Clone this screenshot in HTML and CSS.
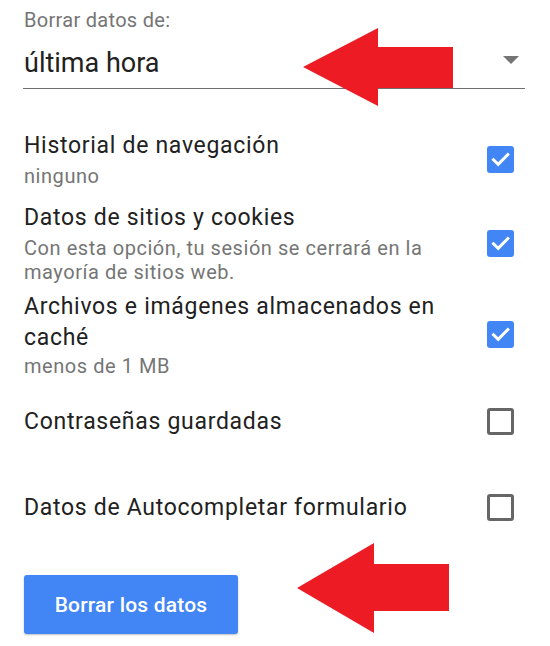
FILE: index.html
```html
<!DOCTYPE html>
<html lang="es">
<head>
<meta charset="utf-8">
<title>Borrar datos de navegación</title>
<link rel="stylesheet" href="styles.css">
</head>
<body>
<main class="page">
  <div class="field-label">Borrar datos de:</div>
  <div class="select">
    <span class="select-value">última hora</span>
    <span class="select-caret"></span>
  </div>

  <ul class="options">
    <li class="row">
      <div class="text">
        <div class="title">Historial de navegación</div>
        <div class="sub">ninguno</div>
      </div>
      <span class="cb checked"><svg viewBox="0 0 27 27" width="27" height="27"><path d="M6.5 13.8 L11.2 18.3 L20.8 8.6" fill="none" stroke="#fff" stroke-width="3" stroke-linecap="square"/></svg></span>
    </li>
    <li class="row">
      <div class="text">
        <div class="title">Datos de sitios y cookies</div>
        <div class="sub">Con esta opción, tu sesión se cerrará en la mayoría de sitios web.</div>
      </div>
      <span class="cb checked"><svg viewBox="0 0 27 27" width="27" height="27"><path d="M6.5 13.8 L11.2 18.3 L20.8 8.6" fill="none" stroke="#fff" stroke-width="3" stroke-linecap="square"/></svg></span>
    </li>
    <li class="row compact">
      <div class="text">
        <div class="title">Archivos e imágenes almacenados en caché</div>
        <div class="sub">menos de 1 MB</div>
      </div>
      <span class="cb checked"><svg viewBox="0 0 27 27" width="27" height="27"><path d="M6.5 13.8 L11.2 18.3 L20.8 8.6" fill="none" stroke="#fff" stroke-width="3" stroke-linecap="square"/></svg></span>
    </li>
    <li class="row single">
      <div class="text">
        <div class="title">Contraseñas guardadas</div>
      </div>
      <span class="cb"></span>
    </li>
    <li class="row single">
      <div class="text">
        <div class="title">Datos de Autocompletar formulario</div>
      </div>
      <span class="cb"></span>
    </li>
  </ul>

  <button class="btn" type="button">Borrar los datos</button>

  <svg class="arrow arrow-top" width="160" height="84" viewBox="0 0 160 84">
    <polygon points="0,39 75,0 75,19 150,19 150,60 75,60 75,78" fill="#ED1C24"/>
  </svg>
  <svg class="arrow arrow-bottom" width="160" height="94" viewBox="0 0 160 94">
    <polygon points="0,45 77,0 77,21 152,21 152,68 77,68 77,90" fill="#ED1C24"/>
  </svg>
</main>
</body>
</html>
```

FILE: styles.css
```css
html, body {
  margin: 0;
  padding: 0;
  background: #ffffff;
}

body {
  font-family: Roboto, "Noto Sans", "Liberation Sans", Arial, sans-serif;
  color: #212121;
}

.page {
  position: relative;
  width: 550px;
  height: 646px;
  box-sizing: border-box;
  padding: 8px 24px 0 24px;
  overflow: hidden;
}

.field-label {
  font-size: 20px;
  line-height: 24px;
  letter-spacing: 0.3px;
  color: #757575;
}

.select {
  display: flex;
  align-items: center;
  justify-content: space-between;
  margin-top: 14px;
  margin-left: -1px;
  padding-bottom: 8px;
  border-bottom: 1.5px solid #6f6f6f;
  width: 502px;
}

.select-value {
  font-size: 27px;
  line-height: 34px;
  color: #212121;
  padding-left: 1px;
}

.select-caret {
  width: 0;
  height: 0;
  border-left: 8px solid transparent;
  border-right: 8px solid transparent;
  border-top: 8px solid #757575;
  margin-right: 6px;
  margin-bottom: 6px;
}

.options {
  list-style: none;
  margin: 34px 0 0 0;
  padding: 0;
}

.row {
  display: flex;
  align-items: center;
  justify-content: space-between;
  padding: 7px 12px 7px 0;
}

.row.compact {
  padding-top: 0;
  padding-bottom: 0;
}

.row.compact .sub {
  margin-top: 1px;
}

.row.single {
  min-height: 86px;
  box-sizing: border-box;
}

.text {
  flex: 1;
  padding-right: 24px;
}

.title {
  font-size: 23px;
  line-height: 31px;
  letter-spacing: 0.7px;
  color: #212121;
}

.sub {
  margin-top: 3px;
  font-size: 20px;
  line-height: 24px;
  letter-spacing: 0.55px;
  color: #757575;
}

.cb {
  flex: none;
  width: 27px;
  height: 27px;
  box-sizing: border-box;
  border: 3px solid #666666;
  border-radius: 3px;
  display: flex;
  align-items: center;
  justify-content: center;
}

.cb svg {
  display: block;
}

.cb.checked {
  border: none;
  background: #4285F4;
}

.btn {
  display: block;
  margin-top: 25px;
  width: 214px;
  height: 59px;
  border: none;
  border-radius: 3px;
  background: #4285F4;
  color: #ffffff;
  font-family: Roboto, "Noto Sans", "Liberation Sans", Arial, sans-serif;
  font-size: 21px;
  font-weight: 500;
  letter-spacing: 0.2px;
  box-shadow: 0 1px 2px rgba(0, 0, 0, 0.25);
  padding: 0;
}

.arrow {
  position: absolute;
  display: block;
}

.arrow-top {
  left: 303px;
  top: 28px;
}

.arrow-bottom {
  left: 297px;
  top: 543px;
}
```
